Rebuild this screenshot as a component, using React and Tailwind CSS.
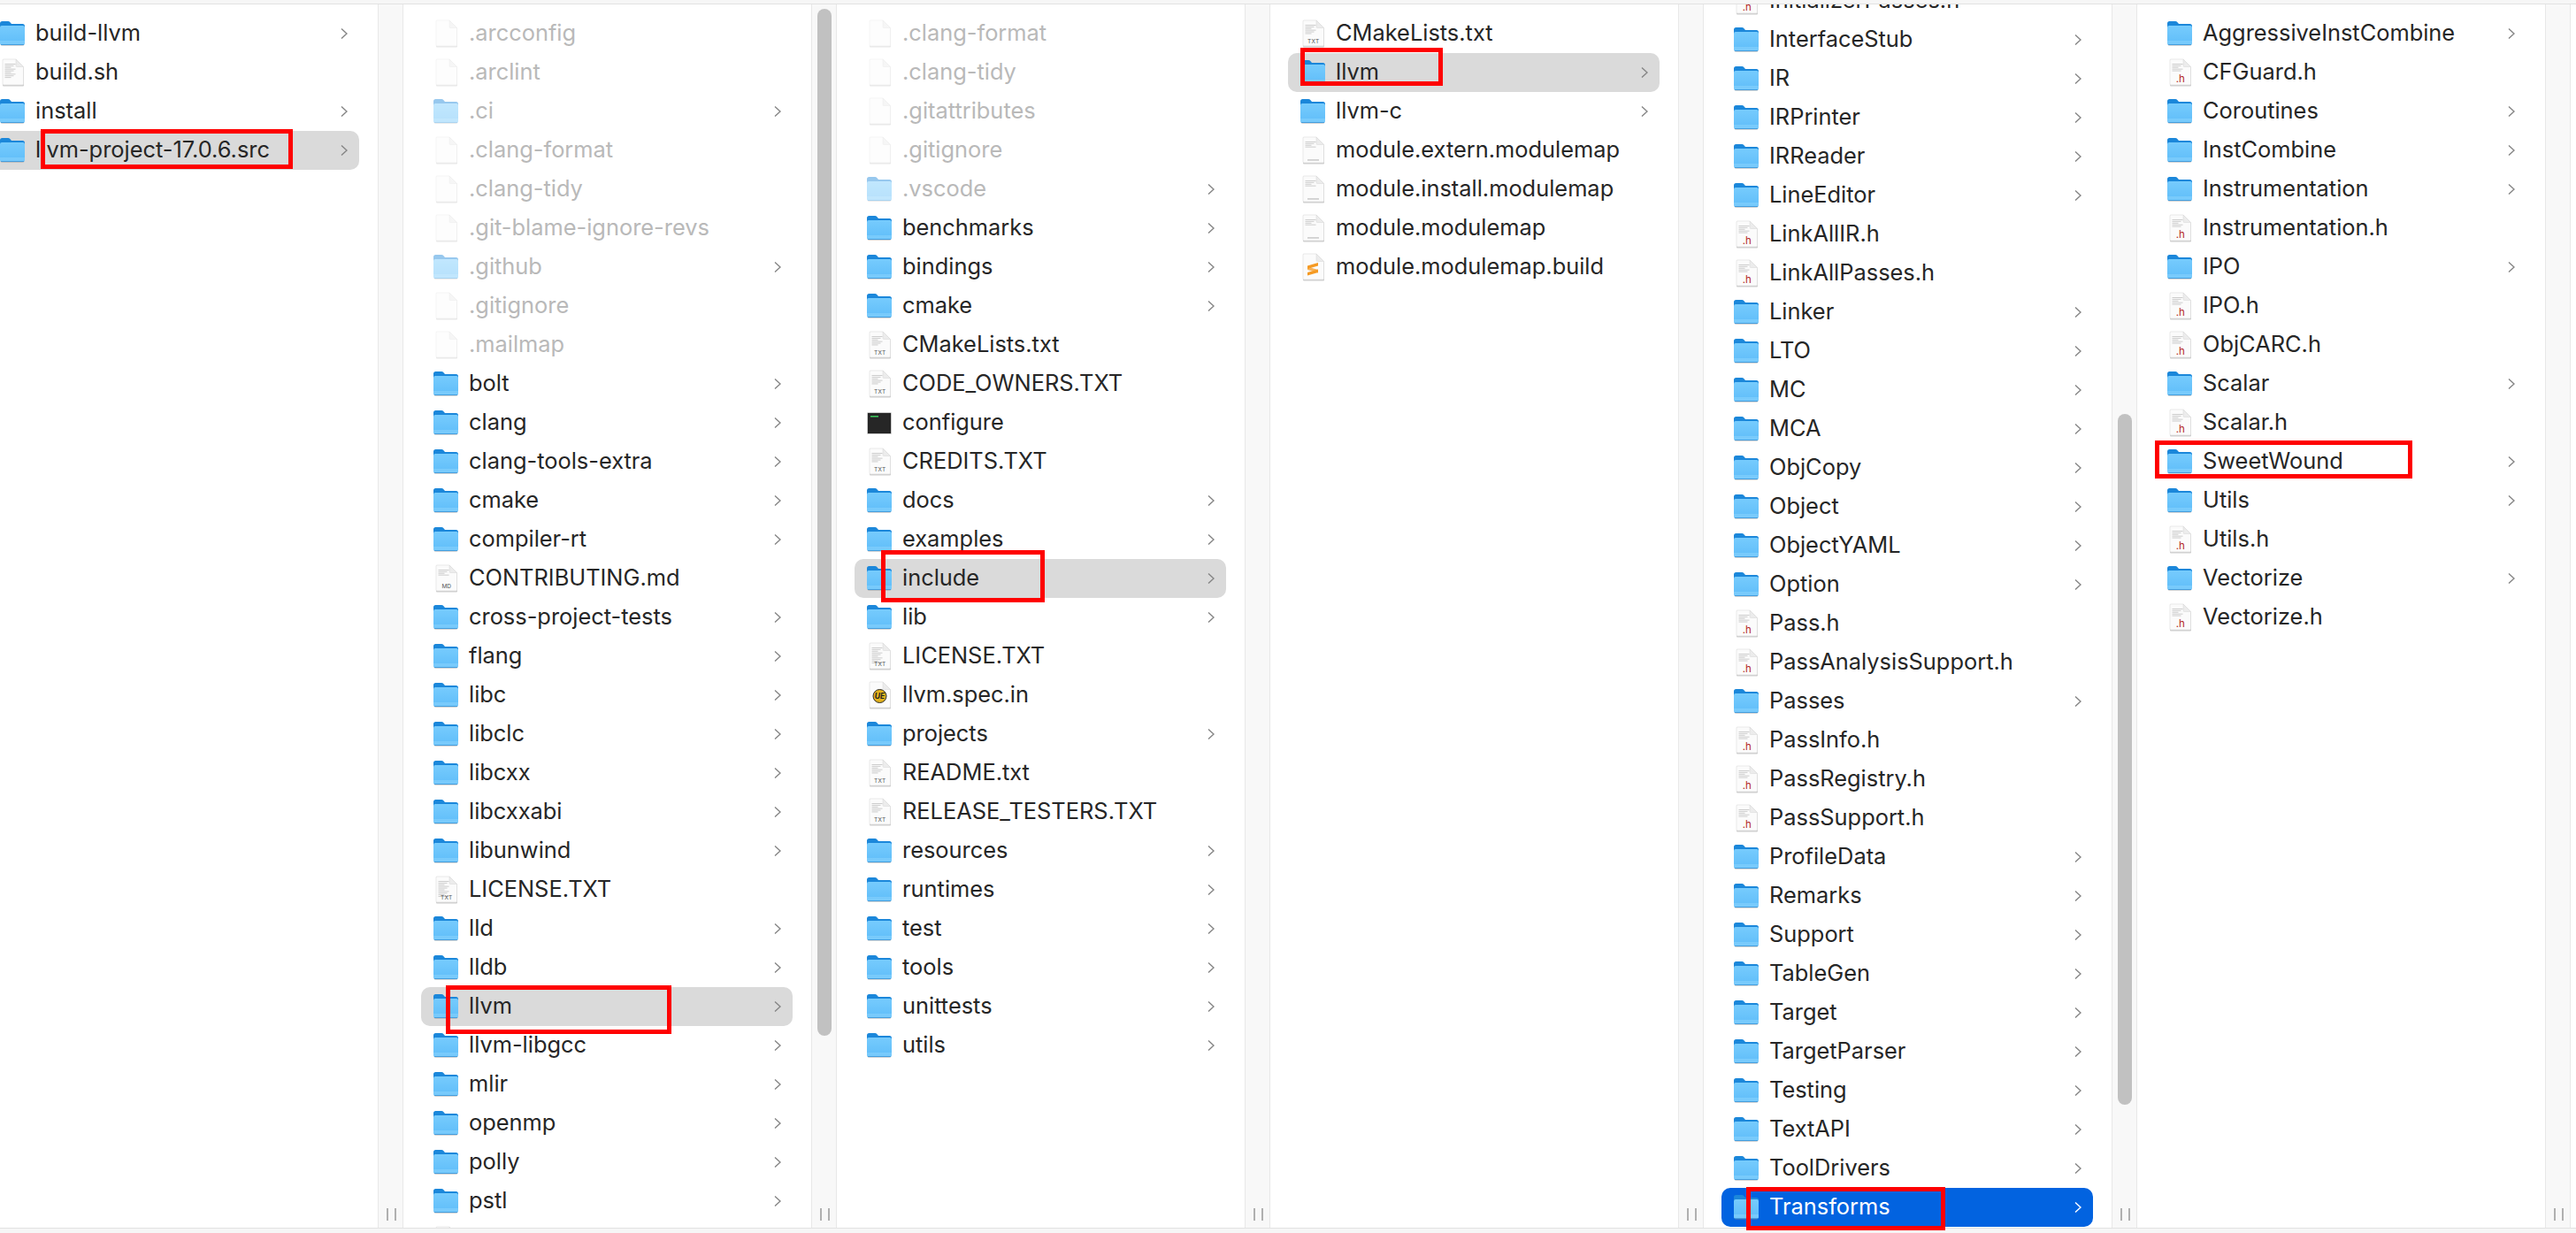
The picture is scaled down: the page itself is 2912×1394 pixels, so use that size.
import { useId } from 'react';

const FILE_LINES = { sh: 9, txt: 6, md: 4, h: 5, doc: 4, lic: 10, none: 0, blank: 1 };

const COLUMNS = [
  {
    rows: [
      { name: 'build-llvm' },
      { name: 'build.sh', icon: 'sh' },
      { name: 'install' },
      { name: 'llvm-project-17.0.6.src', selected: true },
    ],
  },
  {
    rows: [
      { name: '.arcconfig', icon: 'none', hidden: true },
      { name: '.arclint', icon: 'none', hidden: true },
      { name: '.ci', hidden: true },
      { name: '.clang-format', icon: 'none', hidden: true },
      { name: '.clang-tidy', icon: 'none', hidden: true },
      { name: '.git-blame-ignore-revs', icon: 'none', hidden: true },
      { name: '.github', hidden: true },
      { name: '.gitignore', icon: 'none', hidden: true },
      { name: '.mailmap', icon: 'none', hidden: true },
      { name: 'bolt' },
      { name: 'clang' },
      { name: 'clang-tools-extra' },
      { name: 'cmake' },
      { name: 'compiler-rt' },
      { name: 'CONTRIBUTING.md', icon: 'md' },
      { name: 'cross-project-tests' },
      { name: 'flang' },
      { name: 'libc' },
      { name: 'libclc' },
      { name: 'libcxx' },
      { name: 'libcxxabi' },
      { name: 'libunwind' },
      { name: 'LICENSE.TXT', icon: 'lic' },
      { name: 'lld' },
      { name: 'lldb' },
      { name: 'llvm', selected: true },
      { name: 'llvm-libgcc' },
      { name: 'mlir' },
      { name: 'openmp' },
      { name: 'polly' },
      { name: 'pstl' },
      { name: '', icon: 'md' },
    ],
  },
  {
    rows: [
      { name: '.clang-format', icon: 'none', hidden: true },
      { name: '.clang-tidy', icon: 'none', hidden: true },
      { name: '.gitattributes', icon: 'none', hidden: true },
      { name: '.gitignore', icon: 'none', hidden: true },
      { name: '.vscode', hidden: true },
      { name: 'benchmarks' },
      { name: 'bindings' },
      { name: 'cmake' },
      { name: 'CMakeLists.txt', icon: 'txt' },
      { name: 'CODE_OWNERS.TXT', icon: 'txt' },
      { name: 'configure', icon: 'term' },
      { name: 'CREDITS.TXT', icon: 'txt' },
      { name: 'docs' },
      { name: 'examples' },
      { name: 'include', selected: true },
      { name: 'lib' },
      { name: 'LICENSE.TXT', icon: 'lic' },
      { name: 'llvm.spec.in', icon: 'ue' },
      { name: 'projects' },
      { name: 'README.txt', icon: 'txt' },
      { name: 'RELEASE_TESTERS.TXT', icon: 'txt' },
      { name: 'resources' },
      { name: 'runtimes' },
      { name: 'test' },
      { name: 'tools' },
      { name: 'unittests' },
      { name: 'utils' },
    ],
  },
  {
    rows: [
      { name: 'CMakeLists.txt', icon: 'txt' },
      { name: 'llvm', selected: true },
      { name: 'llvm-c' },
      { name: 'module.extern.modulemap', icon: 'doc' },
      { name: 'module.install.modulemap', icon: 'doc' },
      { name: 'module.modulemap', icon: 'doc' },
      { name: 'module.modulemap.build', icon: 'sublime' },
    ],
  },
  {
    scrolled: true,
    rows: [
      { name: 'InitializerPasses.h', icon: 'h' },
      { name: 'InterfaceStub' },
      { name: 'IR' },
      { name: 'IRPrinter' },
      { name: 'IRReader' },
      { name: 'LineEditor' },
      { name: 'LinkAllIR.h', icon: 'h' },
      { name: 'LinkAllPasses.h', icon: 'h' },
      { name: 'Linker' },
      { name: 'LTO' },
      { name: 'MC' },
      { name: 'MCA' },
      { name: 'ObjCopy' },
      { name: 'Object' },
      { name: 'ObjectYAML' },
      { name: 'Option' },
      { name: 'Pass.h', icon: 'h' },
      { name: 'PassAnalysisSupport.h', icon: 'h' },
      { name: 'Passes' },
      { name: 'PassInfo.h', icon: 'h' },
      { name: 'PassRegistry.h', icon: 'h' },
      { name: 'PassSupport.h', icon: 'h' },
      { name: 'ProfileData' },
      { name: 'Remarks' },
      { name: 'Support' },
      { name: 'TableGen' },
      { name: 'Target' },
      { name: 'TargetParser' },
      { name: 'Testing' },
      { name: 'TextAPI' },
      { name: 'ToolDrivers' },
      { name: 'Transforms', active: true },
    ],
  },
  {
    rows: [
      { name: 'AggressiveInstCombine' },
      { name: 'CFGuard.h', icon: 'h' },
      { name: 'Coroutines' },
      { name: 'InstCombine' },
      { name: 'Instrumentation' },
      { name: 'Instrumentation.h', icon: 'h' },
      { name: 'IPO' },
      { name: 'IPO.h', icon: 'h' },
      { name: 'ObjCARC.h', icon: 'h' },
      { name: 'Scalar' },
      { name: 'Scalar.h', icon: 'h' },
      { name: 'SweetWound' },
      { name: 'Utils' },
      { name: 'Utils.h', icon: 'h' },
      { name: 'Vectorize' },
      { name: 'Vectorize.h', icon: 'h' },
    ],
  },
];

// red annotation boxes drawn on top of the screenshot
const MARKS = [
  'left-[46px] top-[146px] w-[285px] h-[45px]',
  'left-[504px] top-[1114px] w-[255px] h-[55px]',
  'left-[996px] top-[622px] w-[185px] h-[59px]',
  'left-[1470px] top-[54px] w-[161px] h-[43px]',
  'left-[1974px] top-[1342px] w-[225px] h-[49px]',
  'left-[2436px] top-[498px] w-[291px] h-[43px]',
];

function FolderIcon() {
  const id = useId();
  return (
    <svg viewBox="0 0 28 32" className="w-7 h-8 block">
      <defs>
        <linearGradient id={id} x1="0" y1="0" x2="0" y2="1">
          <stop offset="0" stopColor="#76cbfd" />
          <stop offset="1" stopColor="#5fbdf9" />
        </linearGradient>
      </defs>
      <rect x="0.5" y="7" width="27" height="23" rx="2" fill="#8a8a8a" opacity="0.35" />
      <path d="M0 4.5Q0 2 2.5 2H9Q10.5 2 11.5 3.2L13 5H25.5Q28 5 28 7.5V12H0Z" fill="#1b87da" />
      <path d="M0 9Q0 7 2 7H26Q28 7 28 9V26.5Q28 29 25.5 29H2.5Q0 29 0 26.5Z" fill={`url(#${id})`} />
      <rect x="0" y="24.5" width="28" height="1" fill="#8ed5fd" />
      <rect x="0" y="26.5" width="28" height="1" fill="#8ed5fd" />
      <rect x="1" y="28.2" width="26" height="0.8" fill="#3f97d8" />
    </svg>
  );
}

function FileIcon({ kind }) {
  const lines = FILE_LINES[kind] ?? 0;
  const rows = [];
  for (let i = 0; i < lines; i++) {
    rows.push(<rect key={i} x="5.5" y={6 + i * 1.9} width={i % 3 === 2 ? 7 : i % 3 === 1 ? 10 : 12} height="0.9" fill="#c8c8c8" />);
  }
  return (
    <svg viewBox="0 0 28 32" className="w-7 h-8 block">
      <path d="M3 2.5Q3 1.5 4 1.5H18L27 10.5V30.5Q27 31.5 26 31.5H4Q3 31.5 3 30.5Z" fill="#8f8f8f" opacity="0.45" />
      <path d="M3 2Q3 1 4 1H18L26.5 9.5V29Q26.5 30 25.5 30H4Q3 30 3 29Z" fill="#fbfbfb" stroke="#dcdcdc" strokeWidth="0.6" />
      <path d="M18 1V8.5Q18 9.5 19 9.5H26.5Z" fill="#ececec" stroke="#d6d6d6" strokeWidth="0.5" />
      {rows}
      {(kind === 'txt' || kind === 'lic') && (
        <text x="14.7" y="27" textAnchor="middle" fontSize="6.5" letterSpacing="0.3" fill="#555" fontFamily="Inter, sans-serif">TXT</text>
      )}
      {kind === 'md' && (
        <text x="14.7" y="27" textAnchor="middle" fontSize="6.5" fill="#555" fontFamily="Inter, sans-serif">MD</text>
      )}
      {kind === 'h' && (
        <text x="14.7" y="27" textAnchor="middle" fontSize="11.5" fill="#b3261e" fontFamily="Inter, sans-serif">.h</text>
      )}
      {kind === 'doc' && <rect x="8" y="26.5" width="13" height="0.9" fill="#a8a8a8" />}
      {kind === 'ue' && (
        <>
          <circle cx="14.5" cy="17" r="7.5" fill="#e3b21c" stroke="#2b2b2b" strokeWidth="1" />
          <text x="14.5" y="20" textAnchor="middle" fontSize="8.5" fontWeight="700" fontStyle="italic" fill="#222" fontFamily="Inter, sans-serif">UE</text>
        </>
      )}
      {kind === 'sublime' && (
        <g fill="#f59a23">
          <path d="M8 14.5L20 11V14.5L8 18Z" />
          <path d="M8 19L20 22.5V19L8 15.5Z" opacity="0.75" />
          <path d="M8 22L20 18.5V22L8 25.5Z" />
        </g>
      )}
    </svg>
  );
}

function TerminalIcon() {
  return (
    <svg viewBox="0 0 28 32" className="w-7 h-8 block">
      <rect x="0" y="4" width="28" height="25" rx="1.5" fill="#c9c9c9" />
      <rect x="1" y="5" width="26" height="23" fill="#262626" />
      <rect x="4" y="8" width="9" height="1.6" fill="#3cc45a" />
    </svg>
  );
}

function Chevron({ active }) {
  return (
    <svg viewBox="0 0 8 14" className="w-2 h-3.5 block" fill="none" stroke={active ? '#ffffff' : '#858585'} strokeWidth="1.4">
      <path d="M1 1.5L7 7L1 12.5" />
    </svg>
  );
}

function Row({ row }) {
  const isFolder = !row.icon;
  const bg = row.active ? 'bg-[#0263e0] text-white' : row.selected ? 'bg-[#dadada] text-[#262626]' : row.hidden ? 'text-[#b9b9b9]' : 'text-[#262626]';
  return (
    <div className={`ml-5 w-[420px] h-11 shrink-0 flex items-center pl-3.5 pr-[13px] rounded-[10px] ${bg}`}>
      <div className={row.hidden ? 'w-7 h-8 shrink-0 opacity-45' : 'w-7 h-8 shrink-0'}>
        {isFolder ? <FolderIcon /> : row.icon === 'term' ? <TerminalIcon /> : <FileIcon kind={row.icon} />}
      </div>
      <span className="ml-3 pb-0.5 flex-1 whitespace-nowrap text-[25.4px] leading-[32px]">{row.name}</span>
      {isFolder && <Chevron active={row.active} />}
    </div>
  );
}

function Column({ column }) {
  return (
    <div className="w-[461px] shrink-0 overflow-hidden bg-white">
      <div className={column.scrolled ? '-mt-[26px] flex flex-col' : 'pt-[11px] flex flex-col'}>
        {column.rows.map((row, i) => <Row key={i} row={row} />)}
      </div>
    </div>
  );
}

function Gutter({ thumb }) {
  return (
    <div className="relative w-[29px] shrink-0 flex items-end justify-start gap-[7px] pl-[9px] pb-2 bg-[#f8f8f8] border-x border-[#e8e8e8]">
      {thumb && <div className={`absolute left-[6px] w-4 rounded-lg bg-[#c1c1c1] ${thumb}`} />}
      <div className="w-0.5 h-3.5 bg-[#b0b0b0]" />
      <div className="w-0.5 h-3.5 bg-[#b0b0b0]" />
    </div>
  );
}

const THUMBS = [null, 'top-[5px] h-[1161px]', null, null, 'top-[463px] h-[781px]', null];

export default function App() {
  return (
    <div className="relative w-full h-screen overflow-hidden flex flex-col bg-white font-['Inter',sans-serif]">
      <div className="h-[5px] shrink-0 bg-[#f6f6f6] border-b border-[#e2e2e2]" />
      <div className="flex-1 min-h-0 flex -ml-[34px]">
        {COLUMNS.map((column, i) => (
          <div key={i} className="contents">
            <Column column={column} />
            <Gutter thumb={THUMBS[i]} />
          </div>
        ))}
        <div className="flex-1 bg-white" />
      </div>
      <div className="h-1.5 shrink-0 bg-[#f6f6f6] border-t border-[#e2e2e2]" />

      {MARKS.map(mark => (
        <div key={mark} className={`absolute border-[5px] border-[#ff0000] ${mark}`} />
      ))}
    </div>
  );
}
